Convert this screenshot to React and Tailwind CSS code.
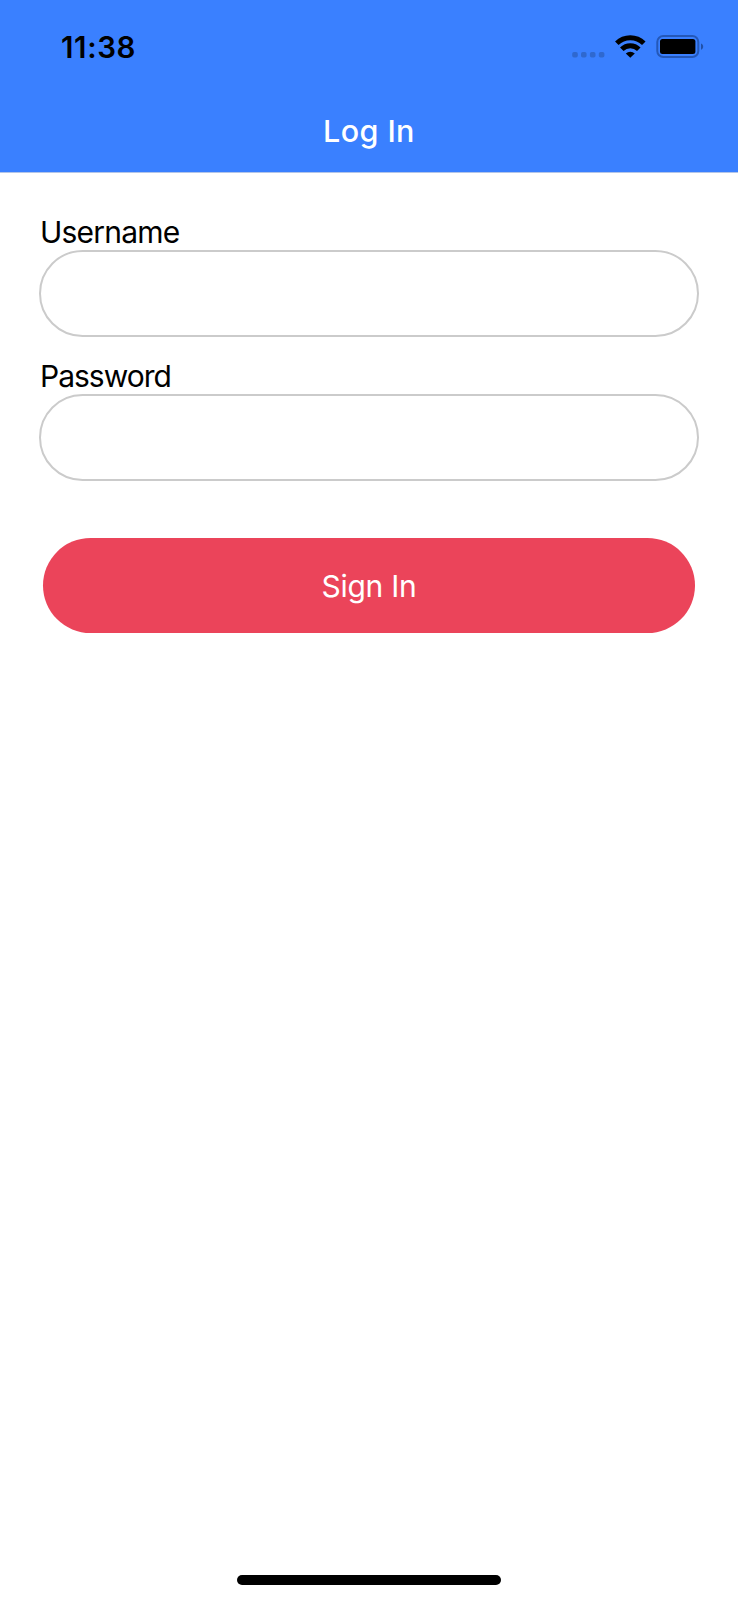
function StatusBar() {
  return (
    <div className="flex h-[94px] items-start justify-between pl-[61px] pr-[34px]">
      <span className="mt-[29px] text-[29.5px] leading-[36px] font-semibold tracking-[0.6px] text-black">11:38</span>
      <svg className="mt-[30px]" width="132" height="34" viewBox="572 30 132 34" fill="none">
        <g fill="#2f68cf">
          <rect x="572.2" y="52" width="5.6" height="5.6" rx="1.8" />
          <rect x="581" y="52" width="5.6" height="5.6" rx="1.8" />
          <rect x="589.9" y="52" width="5.6" height="5.6" rx="1.8" />
          <rect x="598.8" y="52" width="5.6" height="5.6" rx="1.8" />
        </g>
        <g stroke="#000" strokeWidth="5">
          <path d="M616.8 43.2a19.2 19.2 0 0 1 27 0" />
          <path d="M621.8 49.2a12 12 0 0 1 17 0" />
        </g>
        <path d="M625.8 53.4a6.6 6.6 0 0 1 9 0l-4.5 4.4z" fill="#000" />
        <rect x="657.3" y="36" width="41" height="21" rx="6" stroke="#2458b8" strokeWidth="2" />
        <rect x="660" y="39" width="35.4" height="15" rx="2.5" fill="#000" />
        <path d="M701 43.4c2.9 1.3 2.9 5 0 6.3z" fill="#2050a8" />
      </svg>
    </div>
  );
}

function Field({ label, type, labelClass }) {
  return (
    <label className="block">
      <span className={`block h-9 pl-px text-[30px] leading-9 text-black ${labelClass}`}>{label}</span>
      <input
        type={type}
        className="block h-[87px] w-full rounded-full border-2 border-[#cbcbcb] bg-white px-8 text-[30px] outline-none"
      />
    </label>
  );
}

export default function App() {
  return (
    <div className="flex h-[1600px] w-[738px] flex-col overflow-hidden bg-white font-['Inter',sans-serif]">
      <header className="h-[173px] shrink-0 border-b border-[#b3c5e8] bg-[#3a80ff]">
        <StatusBar />
        <h1 className="mt-[19px] text-center text-[30.5px] leading-9 font-[550] tracking-[0.4px] text-white">Log In</h1>
      </header>
      <main className="flex flex-1 flex-col pt-[41px] pr-[39.5px] pl-[39px]">
        <div className="flex flex-col gap-[21px]">
          <Field label="Username" type="text" labelClass="tracking-[-0.8px]" />
          <Field label="Password" type="password" labelClass="tracking-[-1px]" />
        </div>
        <button className="mr-[3.5px] ml-1 mt-[57px] h-[95px] rounded-full bg-[#eb445a] text-[30px] leading-9 tracking-[-0.3px] text-white">
          Sign In
        </button>
      </main>
      <div className="mx-auto mb-[15px] h-[10.5px] w-[264px] shrink-0 rounded-full bg-black" />
    </div>
  );
}
